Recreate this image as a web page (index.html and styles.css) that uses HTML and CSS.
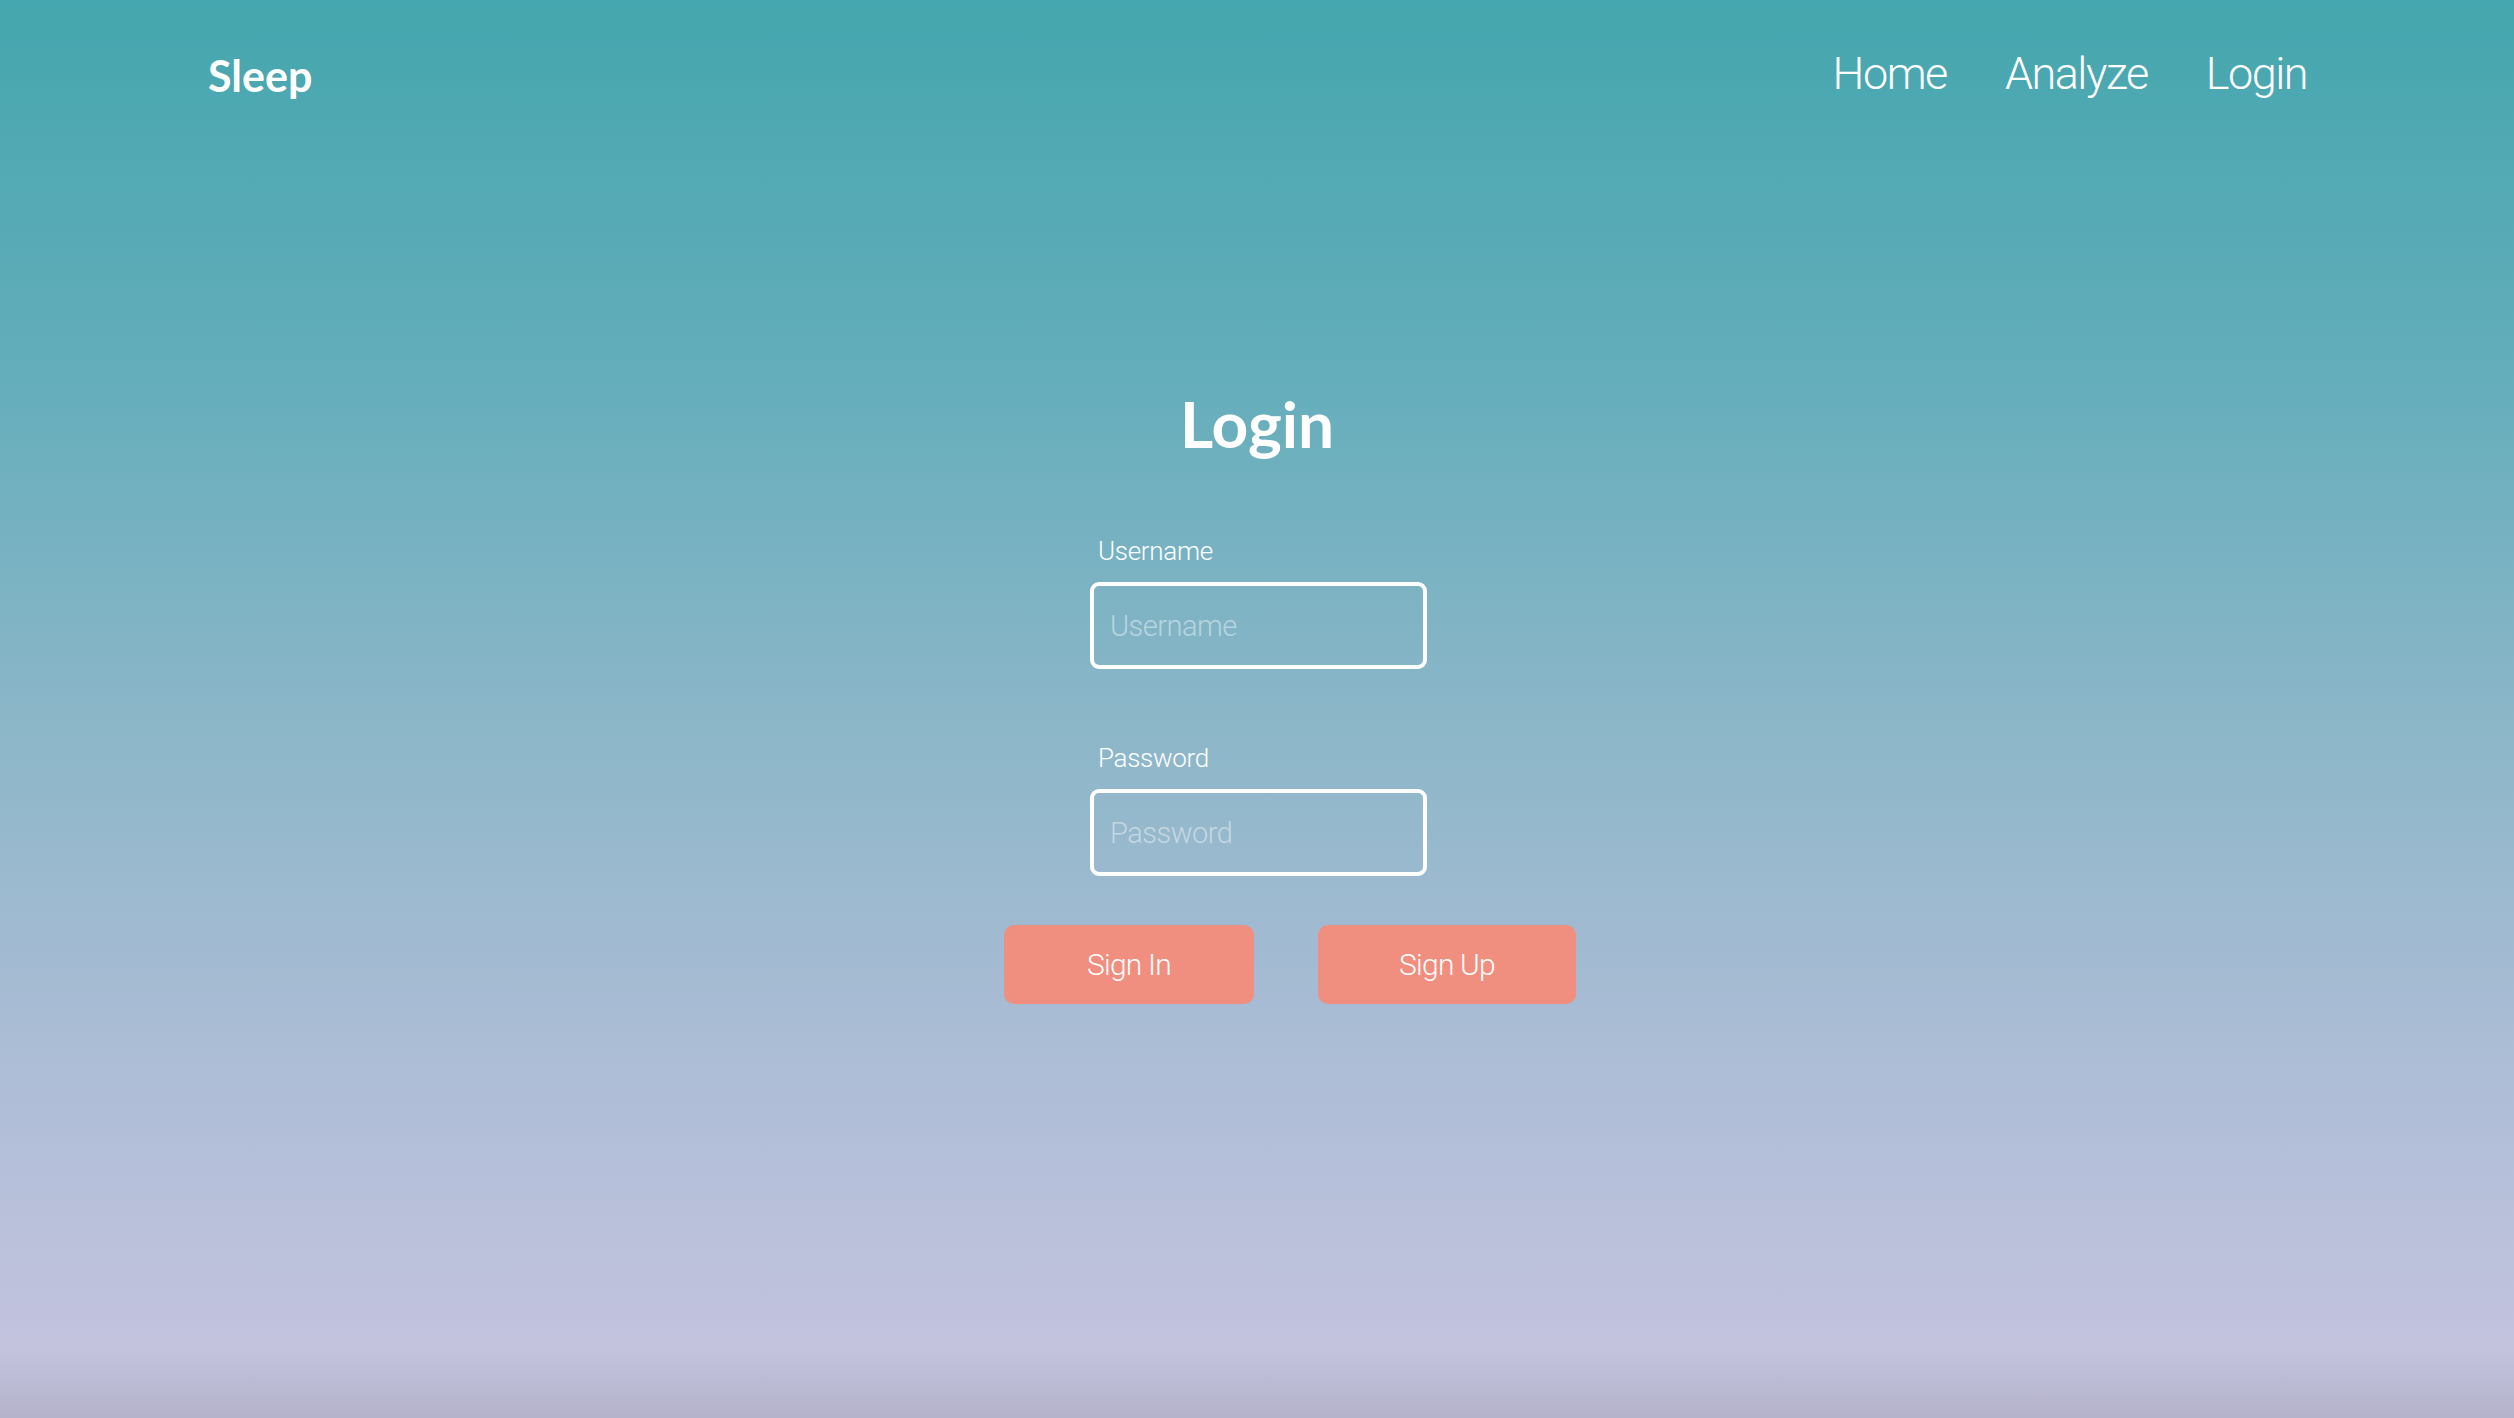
FILE: index.html
```html
<!DOCTYPE html>
<html lang="en">
<head>
<meta charset="utf-8">
<title>Sleep - Login</title>
<link rel="stylesheet" href="styles.css">
</head>
<body>
<div class="page">
  <header class="topbar">
    <a class="logo" href="#">Sleep</a>
    <nav class="nav">
      <a href="#">Home</a>
      <a href="#">Analyze</a>
      <a href="#">Login</a>
    </nav>
  </header>
  <main class="main">
    <h1 class="title">Login</h1>
    <form class="form">
      <div class="field">
        <label for="username">Username</label>
        <input id="username" type="text" placeholder="Username">
      </div>
      <div class="field">
        <label for="password">Password</label>
        <input id="password" type="password" placeholder="Password">
      </div>
      <div class="actions">
        <button type="button" class="btn btn-in">Sign In</button>
        <button type="button" class="btn btn-up">Sign Up</button>
      </div>
    </form>
  </main>
</div>
</body>
</html>
```

FILE: styles.css
```css
html, body {
  margin: 0;
  padding: 0;
  height: 100%;
}

body {
  font-family: "Roboto", "Liberation Sans", sans-serif;
  font-weight: 300;
  color: #fff;
  background: linear-gradient(to bottom, #44a6ae 0%, #62adba 25%, #8ab6c8 50%, #adbdd6 75%, #c3c3de 95%, #b5b3cb 100%);
  overflow: hidden;
}

.page {
  min-height: 100vh;
  display: flex;
  flex-direction: column;
}

.topbar {
  display: flex;
  justify-content: space-between;
  align-items: flex-start;
  padding: 48px 207px 0 208px;
}

.logo {
  font-family: "Lato", "Open Sans", sans-serif;
  font-weight: 700;
  font-size: 43px;
  line-height: 1;
  color: #fff;
  text-decoration: none;
  margin-top: 6px;
}

.nav {
  display: flex;
  gap: 58px;
}

.nav a {
  color: #fff;
  text-decoration: none;
  font-size: 45px;
  letter-spacing: -1.5px;
  line-height: 1;
  margin-top: 3px;
}

.main {
  display: flex;
  flex-direction: column;
  align-items: center;
  padding-top: 295px;
}

.title {
  margin: 0;
  font-family: "Lato", "Open Sans", sans-serif;
  font-weight: 700;
  font-size: 64px;
  line-height: 1;
}

.form {
  display: flex;
  flex-direction: column;
  align-items: center;
  margin-top: 82px;
  margin-left: 3px;
}

.field {
  display: flex;
  flex-direction: column;
  width: 337px;
  margin-bottom: 76px;
}

.field label {
  font-size: 26px;
  font-weight: 300;
  letter-spacing: -0.3px;
  line-height: 1;
  padding-left: 8px;
  margin-bottom: 18px;
}

.field input {
  box-sizing: border-box;
  width: 337px;
  height: 87px;
  border: 4px solid #fff;
  border-radius: 9px;
  background: transparent;
  color: #fff;
  font-family: inherit;
  font-weight: 300;
  font-size: 29px;
  letter-spacing: -0.5px;
  padding: 0 16px;
  outline: none;
}

.field input::placeholder {
  color: rgba(255, 255, 255, 0.45);
}

.actions {
  display: flex;
  gap: 64px;
  margin-top: -27px;
  margin-left: 63px;
}

.btn {
  height: 79px;
  border: none;
  border-radius: 10px;
  background: #f08e80;
  color: #fff;
  font-family: inherit;
  font-weight: 300;
  font-size: 30px;
  letter-spacing: -0.8px;
  cursor: pointer;
}

.btn-in {
  width: 250px;
}

.btn-up {
  width: 258px;
}
```
